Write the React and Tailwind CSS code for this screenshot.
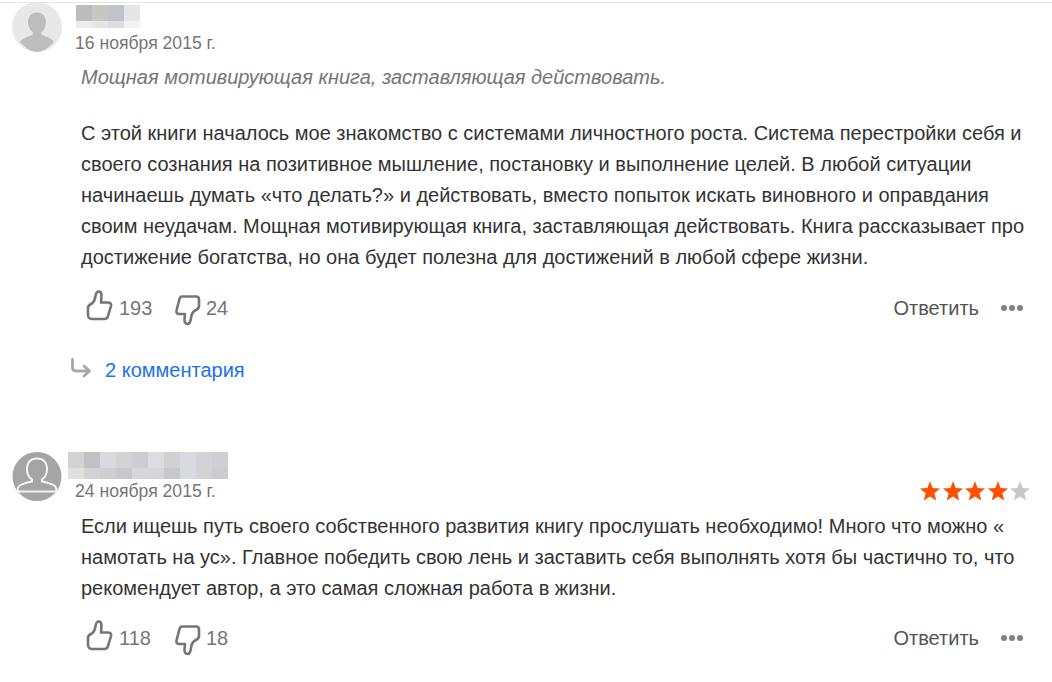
import { useId } from "react";

const firstName = [
  ["#bcbcc0", "#c9c5c3", "#c2c3c9", "#e6e6ea"],
  ["#ececee", "#e6e4e4", "#dddde0", "#f2f2f5"],
];
const secondName = [
  ["#d2d2d4", "#c2c0c4", "#d9dadf", "#d3d2d5", "#cfccd1", "#dcdce1", "#d1d0d3", "#d9dae1", "#d3d3d7", "#cfcfd3"],
  ["#e2e0df", "#d2d3d7", "#cfcfd2", "#c8c8cc", "#d9d6d8", "#d5d6da", "#c8c8cc", "#d9dae0", "#d3d3d5", "#cccccf"],
];

function Mosaic({ rows, second }) {
  return (
    <div className="flex flex-col">
      {rows.map((row, i) => (
        <div key={i} className={`flex ${i === 0 ? "h-4" : second ? "h-[11px]" : "h-[7px]"}`}>
          {row.map((color, j) => (
            <div key={j} className="w-4" style={{ backgroundColor: color }} />
          ))}
        </div>
      ))}
    </div>
  );
}

function AvatarFilled() {
  return (
    <svg width="50" height="50" viewBox="0 0 50 50" className="-mt-[3px] block">
      <circle cx="25" cy="25" r="25" fill="#e8e8e8" />
      <path transform="translate(0 1)" d="M25 9.500c-5.600 0-9 4.200-9 9.600 0 4.200 1.900 8 4.700 10.100v2.600c-4.600 1.500-9.700 3.400-12.700 6.800C12 43.800 18.200 49 25 49s13-5.200 17-10.400c-3-3.400-8.100-5.300-12.700-6.800v-2.600c2.800-2.100 4.700-5.900 4.700-10.100 0-5.400-3.400-9.600-9-9.600z" fill="#bdbdbd" />
    </svg>
  );
}

function AvatarOutline() {
  const id = useId();
  return (
    <svg width="50" height="50" viewBox="0 0 50 50" className="block">
      <defs>
        <clipPath id={id}>
          <circle cx="25" cy="24.500" r="24.500" />
        </clipPath>
      </defs>
      <circle cx="25" cy="24.500" r="24.500" fill="#a5a5a5" />
      <g clipPath={`url(#${id})`} fill="none" stroke="#f4f4f4" strokeWidth="2">
        <path d="M25 6.500c-6.500 0-10 4.500-10 10.500 0 4.500 2 8.500 5 10.500v2c-5 1-10 2-13 4.500-1.500 1.500-1.500 3.500-1.500 5.500h39c0-2 0-4-1.500-5.500-3-2.500-8-3.500-13-4.500v-2c3-2 5-6 5-10.500 0-6-3.500-10.500-10-10.500z" />
      </g>
    </svg>
  );
}

function ThumbUp() {
  return (
    <svg width="27" height="40" viewBox="0 0 27 40" fill="none" stroke="#757575" strokeWidth="2.600" strokeLinejoin="round" strokeLinecap="round" className="block">
      <path d="M2 20C2 18 3 17 5 16C7 15 9 12 9.500 8C10 5.500 11 3.500 12.500 3.500C14.500 3.500 15.500 5 15.500 7.500L15 14.500L22.500 14.500C24.500 14.500 25.500 16 25 18L22 28C21.500 30 20.500 31 18.500 31L6 31C3.500 31 2 29.500 2 27Z" />
    </svg>
  );
}

function ThumbDown() {
  return (
    <svg width="28" height="40" viewBox="0 0 28 40" fill="none" stroke="#757575" strokeWidth="2.600" strokeLinejoin="round" strokeLinecap="round" className="block">
      <path d="M8 8.500L22 8.500C24 8.500 25 9.500 25 11.500L25 18C25 20 24 21 22 22C19.500 23 17.500 25.500 17 30C16.500 34 15.500 36 13.500 36C11 36 10.500 34 10.500 31.500L11 26L5 26C3 26 2 24.500 2.500 22.500L5.500 11C6 9.500 6.500 8.500 8 8.500Z" />
    </svg>
  );
}

function Star({ color }) {
  return (
    <svg width="20" height="20" viewBox="0 0 20 20" className="block">
      <path d="M10 .2L12.700 7.080 20.080 7.520 14.370 12.220 16.230 19.380 10 15.400 3.770 19.380 5.630 12.220 -.08 7.520 7.300 7.080z" fill={color} />
    </svg>
  );
}

function Actions({ likes, dislikes }) {
  return (
    <div className="flex items-center justify-between pr-[3px]">
      <div className="flex items-center text-[20px] text-[#757575]">
        <ThumbUp />
        <span className="ml-[6px] w-[55px]">{likes}</span>
        <ThumbDown />
        <span className="ml-[4px]">{dislikes}</span>
      </div>
      <div className="flex items-center">
        <span className="text-[20px] text-[#555]">Ответить</span>
        <span className="ml-[22px] flex gap-[2px]">
          <i className="block h-[6px] w-[6px] rounded-full bg-[#808080]" />
          <i className="block h-[6px] w-[6px] rounded-full bg-[#808080]" />
          <i className="block h-[6px] w-[6px] rounded-full bg-[#808080]" />
        </span>
      </div>
    </div>
  );
}

export default function App() {
  return (
    <div className="h-[682px] w-[1052px] overflow-hidden bg-white font-['Liberation_Sans',Arial,sans-serif] text-[#333]">
      <div className="mt-[2px] h-px bg-[#e6e6e6]" />

      {/* first review */}
      <div className="flex pl-[12px] pt-[2px]">
        <AvatarFilled />
        <div className="ml-[14px]">
          <Mosaic rows={firstName} />
          <div className="-ml-px mt-[5px] text-[17.6px] leading-[20px] text-[#757575]">16 ноября 2015 г.</div>
        </div>
      </div>
      <div className="pl-[81px] pr-[26px]">
        <p className="mt-[9px] text-[20px] italic leading-[31px] text-[#757575]">Мощная мотивирующая книга, заставляющая действовать.</p>
        <p className="mt-[25px] text-[20px] leading-[31px] text-[#333]">
          С этой книги началось мое знакомство с системами личностного роста. Система перестройки себя и своего сознания на позитивное мышление, постановку и выполнение целей. В любой ситуации начинаешь думать «что делать?» и действовать, вместо попыток искать виновного и оправдания своим неудачам. Мощная мотивирующая книга, заставляющая действовать. Книга рассказывает про достижение богатства, но она будет полезна для достижений в любой сфере жизни.
        </p>
        <div className="mt-[15px] pl-[5px]">
          <Actions likes="193" dislikes="24" />
        </div>
        <div className="mt-[30px] flex items-center text-[20px] leading-6 text-[#1a73e8]">
          <svg width="24" height="24" viewBox="0 0 24 24" fill="none" stroke="#a8a8a8" strokeWidth="2.800" strokeLinecap="round" strokeLinejoin="round" className="-ml-[12px]">
            <path d="M3.500 1.500v8c0 2.500 1 3.500 3.500 3.500h13" />
            <path d="M15 8l5.500 5-5.500 5" />
          </svg>
          <span className="ml-[12px]">2 комментария</span>
        </div>
      </div>

      {/* second review */}
      <div className="mt-[70px] flex pl-[12px]">
        <AvatarOutline />
        <div className="ml-[6px] flex-1 pr-[22px]">
          <Mosaic rows={secondName} second />
          <div className="flex items-start justify-between">
            <div className="ml-[7px] mt-px text-[17.6px] leading-[22px] text-[#757575]">24 ноября 2015 г.</div>
            <div className="mt-[2px] flex gap-[2.5px]">
              <Star color="#ff5000" />
              <Star color="#ff5000" />
              <Star color="#ff5000" />
              <Star color="#ff5000" />
              <Star color="#c8c8c8" />
            </div>
          </div>
        </div>
      </div>
      <div className="pl-[81px] pr-[26px]">
        <p className="mt-[9px] text-[20px] leading-[31px] text-[#333]">
          Если ищешь путь своего собственного развития книгу прослушать необходимо! Много что можно « намотать на ус». Главное победить свою лень и заставить себя выполнять хотя бы частично то, что рекомендует автор, а это самая сложная работа в жизни.
        </p>
        <div className="mt-[14px] pl-[5px]">
          <Actions likes="118" dislikes="18" />
        </div>
      </div>
    </div>
  );
}
